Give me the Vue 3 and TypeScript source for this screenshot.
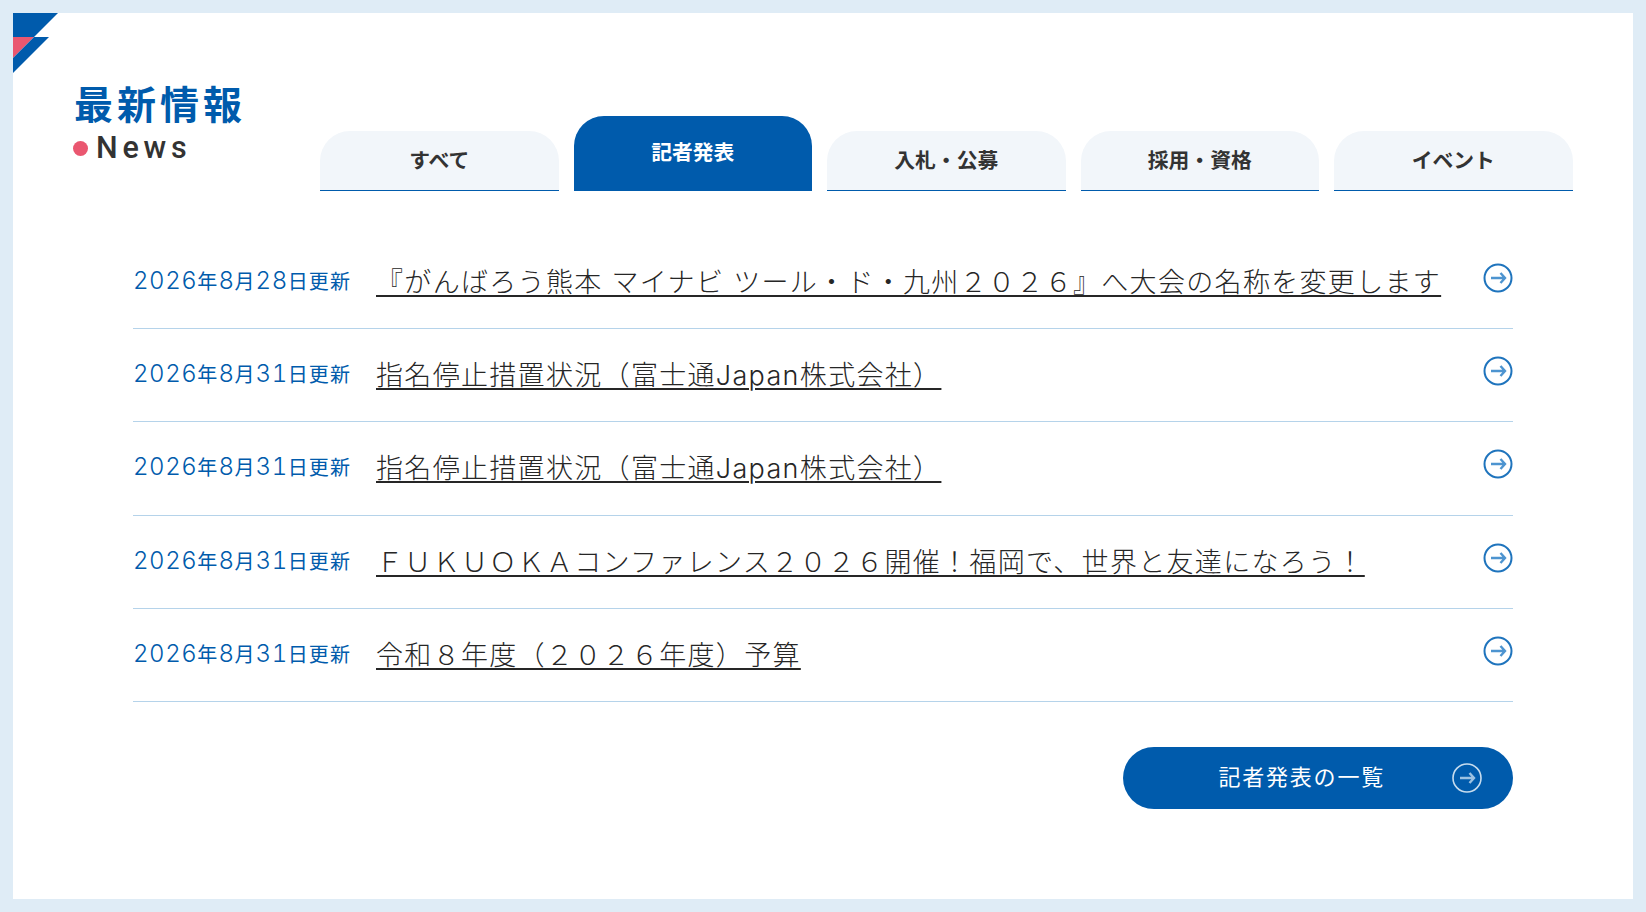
<script setup lang="ts">
const tabs = [
  { label: 'すべて', active: false },
  { label: '記者発表', active: true },
  { label: '入札・公募', active: false },
  { label: '採用・資格', active: false },
  { label: 'イベント', active: false },
]

const news = [
  { date: '2026年8月28日更新', title: '『がんばろう熊本 マイナビ ツール・ド・九州２０２６』へ大会の名称を変更します' },
  { date: '2026年8月31日更新', title: '指名停止措置状況（富士通Japan株式会社）' },
  { date: '2026年8月31日更新', title: '指名停止措置状況（富士通Japan株式会社）' },
  { date: '2026年8月31日更新', title: 'ＦＵＫＵＯＫＡコンファレンス２０２６開催！福岡で、世界と友達になろう！' },
  { date: '2026年8月31日更新', title: '令和８年度（２０２６年度）予算' },
]

// digits are set larger than the kanji around them
const dateParts = (date: string) => date.split(/(\d+)/).filter(Boolean)
const isNum = (part: string) => /^\d+$/.test(part)
</script>

<template>
  <div class="frame">
    <main class="card">
      <svg class="corner" width="46" height="60" viewBox="0 0 46 60" aria-hidden="true">
        <path d="M0 0H45L21 24H0Z" fill="#005bac" />
        <path d="M0 24H21L0 45Z" fill="#ea5770" />
        <path d="M21 24H36L0 60V45Z" fill="#005bac" />
      </svg>

      <header class="head">
        <div class="heading">
          <h2>最新情報</h2>
          <p><span class="dot"></span>News</p>
        </div>
        <nav class="tabs">
          <a v-for="tab in tabs" :key="tab.label" class="tab" :class="{ 'tab--active': tab.active }">{{ tab.label }}</a>
        </nav>
      </header>

      <ul class="list">
        <li v-for="(item, i) in news" :key="i" class="row">
          <span class="date">
            <span v-for="(part, j) in dateParts(item.date)" :key="j" :class="isNum(part) ? 'num' : 'kanji'">{{ part }}</span>
          </span>
          <a class="title">{{ item.title }}</a>
          <svg class="arrow" width="30" height="30" viewBox="0 0 30 30" aria-hidden="true">
            <circle cx="15" cy="15" r="13.5" fill="none" stroke="#1f74bd" stroke-width="2" />
            <path d="M8 15H22M17.5 10L22 15L17.5 20" fill="none" stroke="#4d94d0" stroke-width="2.4" />
          </svg>
        </li>
      </ul>

      <div class="more-wrap">
        <a class="more">
          <span class="more-label">記者発表の一覧</span>
          <svg class="more-icon" width="30" height="30" viewBox="0 0 30 30" aria-hidden="true">
            <circle cx="15" cy="15" r="14" fill="none" stroke="#c6dcee" stroke-width="1.6" />
            <path d="M8 15H22M17.5 10L22 15L17.5 20" fill="none" stroke="#9cc2e2" stroke-width="2.4" />
          </svg>
        </a>
      </div>
    </main>
  </div>
</template>

<style>
html,
body {
  margin: 0;
  background: #dfecf6;
}
</style>

<style scoped>
.frame {
  box-sizing: border-box;
  height: 912px;
  padding: 13px;
  background: #dfecf6;
  font-family: Inter, 'Noto Sans CJK JP', sans-serif;
  color: #333;
}

.card {
  position: relative;
  height: 886px;
  box-sizing: border-box;
  padding: 103px 60px 0 61px;
  background: #fff;
}

.corner {
  position: absolute;
  top: 0;
  left: 0;
}

.head {
  display: flex;
  align-items: flex-end;
}

.heading {
  width: 246px;
  flex: none;
  align-self: flex-start;
  margin-top: -39px;
}

.heading h2 {
  margin: 0;
  font-size: 39px;
  line-height: 56px;
  font-weight: 700;
  letter-spacing: 4px;
  color: #005bac;
}

.heading p {
  display: flex;
  align-items: center;
  margin: -5px 0 0 -1px;
  font-family: Roboto, sans-serif;
  font-size: 30.5px;
  line-height: 40px;
  font-weight: 500;
  letter-spacing: 4.8px;
}

.dot {
  width: 15px;
  height: 15px;
  margin-right: 8px;
  border-radius: 50%;
  background: #ea5770;
}

.tabs {
  display: flex;
  gap: 15px;
  align-items: flex-end;
}

.tab {
  box-sizing: border-box;
  width: 238.5px;
  height: 60px;
  padding-top: 15px;
  border-radius: 30px 30px 0 0;
  border-bottom: 1px solid #005bac;
  background: #f2f6fa;
  text-align: center;
  font-size: 20.8px;
  line-height: 30px;
  font-weight: 700;
}

.tab--active {
  height: 75px;
  padding-top: 22px;
  background: #005bac;
  color: #fff;
}

.list {
  list-style: none;
  margin: 45px 0 0 59px;
  padding: 0;
  width: 1380px;
}

.row {
  display: flex;
  align-items: center;
  box-sizing: border-box;
  height: 93.2px;
  border-bottom: 1px solid #b5d3ea;
}

.date {
  flex: none;
  width: 243px;
  color: #005bac;
  line-height: 34px;
}

.num {
  font-size: 24px;
  font-weight: 300;
  font-variant-numeric: tabular-nums;
  letter-spacing: 0.55px;
}

.kanji {
  font-size: 20px;
  letter-spacing: 1.1px;
}

.title {
  flex: 1;
  margin-top: 2px;
  font-size: 27px;
  line-height: 40px;
  font-weight: 300;
  letter-spacing: 1.32px;
  color: #262626;
  text-decoration: underline;
  text-decoration-thickness: 2px;
  text-underline-offset: 3px;
}

.arrow {
  flex: none;
  margin-bottom: 8px;
}

.more-wrap {
  display: flex;
  justify-content: flex-end;
  width: 1380px;
  margin: 45px 0 0 59px;
}

.more {
  display: flex;
  align-items: center;
  justify-content: flex-end;
  box-sizing: border-box;
  width: 390px;
  height: 62px;
  padding-right: 31px;
  border-radius: 31px;
  background: #005bac;
  color: #fff;
  font-size: 22px;
  letter-spacing: 1.8px;
}

.more-label {
  margin-bottom: 5px;
}

.more-icon {
  margin-left: 67px;
}
</style>
